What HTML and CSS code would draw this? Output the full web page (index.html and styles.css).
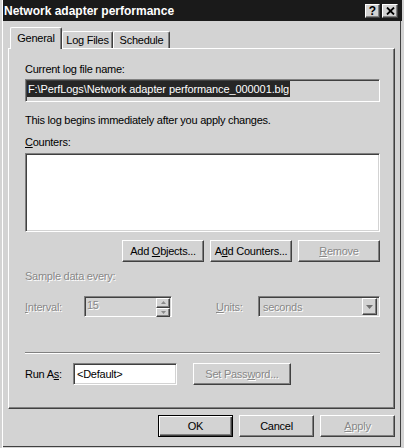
FILE: index.html
```html
<!DOCTYPE html>
<html>
<head>
<meta charset="utf-8">
<link rel="stylesheet" href="styles.css">
</head>
<body>
<div class="window">
  <div class="titlebar">
    <span class="title">Network adapter performance</span>
    <div class="caption-buttons">
      <span class="cap-btn help">?</span>
      <span class="cap-btn close">
        <svg width="9" height="8" viewBox="0 0 9 8"><path d="M1 0.5 L8 7.5 M8 0.5 L1 7.5" stroke="#000" stroke-width="1.8" fill="none"/></svg>
      </span>
    </div>
  </div>
  <div class="main">
    <div class="tabs">
      <div class="tab active">General</div>
      <div class="tab tab-log">Log Files</div>
      <div class="tab tab-sched">Schedule</div>
    </div>
    <div class="panel">
      <div class="label">Current log file name:</div>
      <div class="field readonly"><span class="sel">F:\PerfLogs\Network adapter performance_000001.blg</span></div>
      <div class="label l-info">This log begins immediately after you apply changes.</div>
      <div class="label l-counters"><u>C</u>ounters:</div>
      <div class="field listbox"></div>
      <div class="btn-row">
        <button class="btn w82">Add <u>O</u>bjects...</button>
        <button class="btn w82">A<u>d</u>d Counters...</button>
        <button class="btn w82 disabled"><u>R</u>emove</button>
      </div>
      <div class="label disabled l-sample">Sample data every:</div>
      <div class="interval-row">
        <span class="lbl-interval disabled"><u>I</u>nterval:</span>
        <div class="field spin-field">
          <span class="spin-text">15</span>
          <div class="spin">
            <span class="spin-btn"><svg width="5" height="3" viewBox="0 0 5 3"><path d="M0 3 L2.5 0 L5 3Z" fill="#8a8a8a"/></svg></span>
            <span class="spin-btn"><svg width="5" height="3" viewBox="0 0 5 3"><path d="M0 0 L5 0 L2.5 3Z" fill="#8a8a8a"/></svg></span>
          </div>
        </div>
        <span class="lbl-units disabled"><u>U</u>nits:</span>
        <div class="field combo">
          <span class="combo-text">seconds</span>
          <span class="combo-btn"><svg width="7" height="4" viewBox="0 0 7 4"><path d="M0 0 L7 0 L3.5 4Z" fill="#707070"/></svg></span>
        </div>
      </div>
      <div class="sep"></div>
      <div class="runas-row">
        <span class="lbl-runas">Run A<u>s</u>:</span>
        <div class="field runas-edit">&lt;Default&gt;</div>
        <button class="btn w98 disabled">Set Pass<u>w</u>ord...</button>
      </div>
    </div>
    <div class="footer">
      <button class="btn w75 default">OK</button>
      <button class="btn w75">Cancel</button>
      <button class="btn w75 disabled"><u>A</u>pply</button>
    </div>
  </div>
</div>
</body>
</html>
```

FILE: styles.css
```css
body {
  margin: 0;
  background: #d3d3d3;
  font-family: "Liberation Sans", Arial, sans-serif;
  font-size: 11px;
  letter-spacing: -0.25px;
  color: #000;
}

.window {
  width: 404px;
  height: 448px;
  box-sizing: border-box;
  display: flex;
  flex-direction: column;
  background: #d3d3d3;
  box-shadow: inset 2px 0 #d3d3d3, inset 3px 0 #fff, inset -3px -1px #d3d3d3, inset -4px -2px #404040;
}

.titlebar {
  height: 21px;
  margin: 0 2px 0 3px;
  padding: 0 4px 0 1px;
  background: #1a1a1a;
  display: flex;
  align-items: center;
}

.title {
  flex: 1;
  color: #fff;
  font-weight: bold;
  font-size: 12px;
  letter-spacing: 0;
}

.caption-buttons {
  display: flex;
  gap: 2px;
}

.cap-btn {
  box-sizing: border-box;
  width: 16px;
  height: 14px;
  background: #d3d3d3;
  border: 1px solid;
  border-color: #fff #404040 #404040 #fff;
  box-shadow: inset -1px -1px #808080;
  display: flex;
  align-items: center;
  justify-content: center;
  font-weight: bold;
  font-size: 12px;
  line-height: 12px;
  letter-spacing: 0;
}

.cap-btn.help {
  width: 15px;
}

.main {
  flex: 1;
  padding: 6px 9px 0 8px;
  display: flex;
  flex-direction: column;
}

.tabs {
  height: 21px;
  padding-left: 2px;
  display: flex;
  align-items: flex-end;
}

.tab {
  box-sizing: border-box;
  height: 17px;
  padding-top: 2px;
  line-height: 13px;
  text-align: center;
  background: #d3d3d3;
  border-top: 1px solid #fff;
  border-left: 1px solid #fff;
  border-right: 1px solid #404040;
  box-shadow: inset -1px 0 #808080;
  border-radius: 2px 2px 0 0;
}

.tab.active {
  position: relative;
  z-index: 1;
  width: 52px;
  height: 22px;
  margin-bottom: -1px;
  padding-top: 4px;
}

.tab-log {
  width: 51px;
}

.tab-sched {
  width: 57px;
}

.panel {
  box-sizing: border-box;
  height: 361px;
  border: 1px solid;
  border-color: #fff #404040 #404040 #fff;
  box-shadow: inset -1px -1px #808080;
  padding: 14px 14px 0 16px;
  display: flex;
  flex-direction: column;
}

.label {
  line-height: 13px;
  height: 13px;
  white-space: nowrap;
}

.disabled {
  color: #888;
  text-shadow: 1px 1px #fff;
}

.field {
  box-sizing: border-box;
  border: 1px solid;
  border-color: #808080 #fff #fff #808080;
  box-shadow: inset 1px 1px #404040, inset -1px -1px #d3d3d3;
}

.readonly {
  margin-top: 3px;
  height: 23px;
  padding: 1px;
  background: #d3d3d3;
}

.sel {
  display: inline-block;
  height: 16px;
  line-height: 16px;
  padding: 0 1px;
  background: #262626;
  color: #fff;
  white-space: nowrap;
  letter-spacing: -0.1px;
}

.l-info {
  margin-top: 12px;
}

.l-counters {
  margin-top: 9px;
}

.listbox {
  margin-top: 4px;
  height: 79px;
  background: #fff;
}

.btn-row {
  margin-top: 8px;
  display: flex;
  justify-content: flex-end;
  gap: 6px;
}

.btn {
  box-sizing: border-box;
  height: 22px;
  padding: 0;
  margin: 0;
  background: #d3d3d3;
  border: 1px solid;
  border-color: #fff #404040 #404040 #fff;
  box-shadow: inset -1px -1px #808080;
  font-family: inherit;
  font-size: 11px;
  letter-spacing: -0.25px;
  color: #000;
  text-align: center;
  line-height: 18px;
  white-space: nowrap;
}

.btn.disabled {
  color: #888;
  text-shadow: 1px 1px #fff;
}

.btn.default {
  border: 1px solid #000;
  box-shadow: inset 1px 1px #fff, inset -1px -1px #404040, inset -2px -2px #808080;
}

.w82 {
  width: 82px;
}

.w98 {
  width: 98px;
}

.w75 {
  width: 75px;
}

.l-sample {
  margin-top: 8px;
}

.interval-row {
  margin-top: 13px;
  height: 21px;
  display: flex;
  align-items: center;
}

.lbl-interval {
  width: 59px;
}

.spin-field {
  width: 88px;
  height: 21px;
  background: #d3d3d3;
  display: flex;
  align-items: flex-start;
  padding: 1px 1px 1px 2px;
}

.spin-text {
  flex: 1;
  line-height: 14px;
  color: #888;
  text-shadow: 1px 1px #fff;
}

.spin {
  width: 14px;
  height: 19px;
  display: flex;
  flex-direction: column;
}

.spin-btn {
  box-sizing: border-box;
  flex: 1;
  background: #d3d3d3;
  border: 1px solid;
  border-color: #fff #404040 #404040 #fff;
  box-shadow: inset -1px -1px #808080;
  display: flex;
  align-items: center;
  justify-content: center;
}

.lbl-units {
  margin-left: 44px;
  width: 42px;
}

.combo {
  width: 122px;
  height: 21px;
  background: #d3d3d3;
  display: flex;
  align-items: center;
  padding: 1px 2px 1px 4px;
}

.combo-text {
  flex: 1;
  color: #888;
  text-shadow: 1px 1px #fff;
}

.combo-btn {
  box-sizing: border-box;
  width: 15px;
  height: 17px;
  background: #d3d3d3;
  border: 1px solid;
  border-color: #fff #404040 #404040 #fff;
  box-shadow: inset -1px -1px #808080;
  display: flex;
  align-items: center;
  justify-content: center;
}

.sep {
  margin-top: 35px;
  height: 0;
  border-top: 1px solid #808080;
  border-bottom: 1px solid #fff;
}

.runas-row {
  margin-top: 9px;
  height: 22px;
  display: flex;
  align-items: center;
}

.lbl-runas {
  width: 48px;
}

.runas-edit {
  width: 104px;
  height: 22px;
  margin-right: 16px;
  background: #fff;
  padding: 2px 3px;
  line-height: 16px;
}

.footer {
  margin-top: 6px;
  display: flex;
  justify-content: flex-end;
  gap: 6px;
}
```
